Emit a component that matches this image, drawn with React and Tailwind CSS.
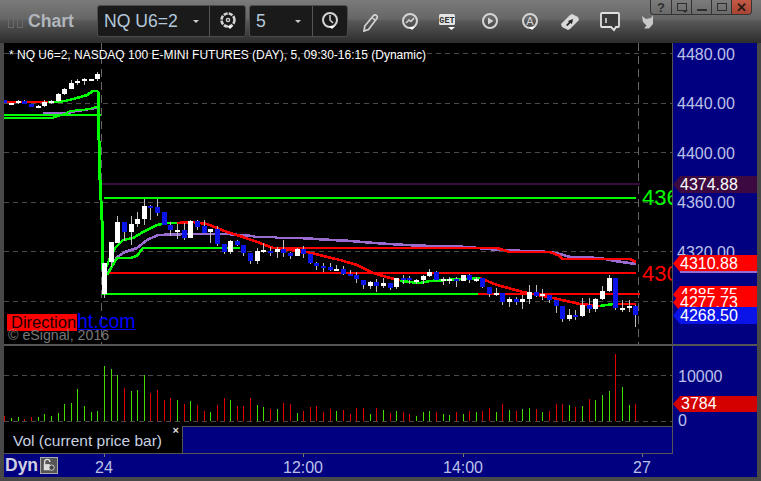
const FONT = { fontFamily: '"Liberation Sans", Arial, sans-serif' }

// top, bottom, high, low in page pixels, w = up bar, b = down bar
const candles = [
  ['b',100,103,100,103],['w',103,105,103,105],['w',101,103,100,104],['b',101,104,100,104],['b',104,107,104,107],
  ['w',106,108,105,108],['w',102,106,100,107],['w',101,103,100,104],['w',94,101,93,102],['w',89,94,88,95],
  ['w',83,89,80,89],['w',81,83,79,85],['w',79,81,78,85],['w',79,81,79,81],['w',74,79,72,81],
  ['w',263,294,263,298],['w',242,262,242,267],['w',222,243,216,243],['b',222,232,222,241],['w',224,232,216,245],
  ['w',219,224,212,227],['w',206,219,199,225],['b',206,208,205,220],['b',207,213,199,216],['b',212,225,212,225],
  ['b',225,230,222,236],['w',230,232,224,239],['b',230,238,223,240],['w',221,238,220,238],['b',221,227,220,230],
  ['b',226,233,220,233],['w',229,232,229,243],['b',229,244,226,246],['b',244,252,244,254],['w',241,252,240,254],
  ['b',241,245,240,246],['b',245,253,245,256],['b',253,261,253,264],['w',251,261,248,264],['w',250,252,243,253],
  ['b',251,253,247,256],['w',249,252,247,258],['b',249,253,240,257],['b',253,256,252,259],['w',249,256,248,256],
  ['b',249,254,246,258],['b',254,263,254,264],['b',263,266,262,270],['b',266,268,263,272],['b',267,270,263,271],
  ['w',269,271,265,271],['b',269,274,266,275],['b',274,276,270,276],['b',275,279,272,283],['b',280,285,280,289],
  ['w',282,286,281,289],['b',282,286,279,292],['w',283,286,278,288],['b',283,288,283,290],['w',278,287,278,289],
  ['b',278,280,275,284],['b',278,280,276,284],['w',280,282,279,284],['w',276,280,275,284],['w',272,276,269,277],
  ['b',272,280,271,281],['w',279,281,277,285],['w',279,281,277,284],['b',279,281,277,287],['w',275,281,275,281],
  ['b',275,280,274,283],['w',279,281,277,282],['b',278,287,278,288],['b',287,294,287,297],['w',293,295,288,296],
  ['b',293,302,293,305],['w',299,302,297,307],['b',299,302,297,305],['w',299,302,295,309],['w',292,299,285,304],
  ['b',292,296,285,297],['w',294,296,289,300],['b',295,300,295,303],['b',300,306,300,313],['b',306,319,306,322],
  ['w',315,319,309,321],['b',315,317,310,320],['w',305,316,298,317],['b',305,309,298,313],['w',299,309,298,312],
  ['w',291,299,286,300],['w',278,291,275,292],['b',278,308,278,310],['w',308,310,300,312],['w',306,308,300,312],
  ['b',306,315,305,327],
]

// height, r = red, g = green
const volume = [
  [5,'r'],[3,'g'],[4,'g'],[2,'r'],[4,'r'],[4,'g'],[7,'g'],[5,'g'],[8,'g'],[17,'g'],
  [18,'g'],[32,'g'],[15,'g'],[9,'g'],[10,'g'],[55,'g'],[52,'g'],[46,'g'],[33,'r'],[30,'g'],
  [31,'g'],[46,'g'],[28,'r'],[31,'r'],[21,'r'],[23,'r'],[21,'g'],[17,'r'],[20,'g'],[16,'r'],
  [10,'r'],[9,'g'],[16,'r'],[23,'r'],[21,'g'],[15,'r'],[15,'r'],[23,'r'],[16,'g'],[14,'g'],
  [12,'r'],[12,'g'],[18,'r'],[17,'r'],[8,'g'],[10,'r'],[14,'r'],[15,'r'],[9,'r'],[12,'r'],
  [10,'g'],[11,'r'],[7,'r'],[13,'r'],[13,'r'],[7,'g'],[13,'r'],
  [11,'g'],[8,'r'],[10,'g'],[9,'r'],[7,'r'],[5,'g'],[9,'g'],[10,'g'],[9,'r'],[7,'g'],
  [6,'g'],[9,'r'],[7,'g'],[10,'r'],[9,'g'],[10,'r'],[13,'r'],[9,'g'],[17,'r'],[11,'g'],
  [10,'r'],[12,'g'],[13,'g'],[12,'r'],[9,'g'],[10,'r'],[17,'r'],[17,'r'],[16,'g'],[14,'r'],
  [15,'g'],[22,'r'],[21,'g'],[26,'g'],[30,'g'],[67,'r'],[34,'g'],[16,'g'],[17,'r'],
]

const barX = (i) => Math.round(4.4 + 6.64 * i)

const GRN = '#00ff00'
const RED = '#ff0000'
const PUR = '#9a6cd0'

const lines = [
  // early session
  [PUR, 2, '43,113 70,113 72,112 85,110 97,108'],
  [GRN, 2, '4,115 101,115'],
  [GRN, 2, '4,118 52,118 58,116 65,114 70,111 80,110 90,109 95,107 98,107'],
  [RED, 2, '4,102 48,102'],
  [GRN, 2.6, '48,102 57,102 65,101 77,98 87,95 93,91 98,91'],
  // levels
  ['#3c0a40', 2, '100,184 640,184'],
  [GRN, 2, '104,198 636,198'],
  [RED, 2, '108,273 636,273'],
  [GRN, 2, '102,294 478,294'],
  [RED, 2, '478,294 640,294'],
  // slow averages
  [PUR, 2.6, '108,273 117,257 125,252 137,248 147,240 158,235 187,234 227,234 240,235 253,236 255,237 275,237 277,238 300,238 316,239 332,240 351,241 362,242 375,243 389,244 406,245 430,246 453,246 478,248 500,250 550,252 560,254 570,257 600,258 615,261 636,264'],
  [GRN, 2.6, '107,275 117,258 130,258 137,256 143,248 157,248 240,248'],
  [RED, 2.6, '273,248 497,248 503,250 510,252 550,252 560,256 562,259 630,259 636,262'],
  // fast average
  [GRN, 2.6, '103,273 115,248 123,240 133,238 143,232 157,225 167,223 177,223'],
  [RED, 2.6, '177,223 193,222 207,224 227,232 240,236 260,243 273,248 307,252 340,260 357,265 373,273 390,278 400,280'],
  [GRN, 2.6, '400,281 420,283 430,281 447,280 480,278'],
  [RED, 2.6, '480,278 497,285 523,292 533,294 553,298 580,304 600,306'],
  [GRN, 2.6, '600,306 613,304'],
  [RED, 2.6, '613,304 636,304'],
  // opening gap
  [GRN, 3, '98,91 99,140 100,180 102,220 103,270 104,294'],
]

const ticks = [
  ['4480.00', 46],
  ['4440.00', 95],
  ['4400.00', 145],
  ['4360.00', 194],
  ['4320.00', 244],
]

function PriceChart() {
  return (
    <svg viewBox="4 43 668 301" width="668" height="301" shapeRendering="crispEdges" className="block">
      {[53, 103, 152, 202, 251, 301].map((y) => (
        <line key={y} x1="4" x2="672" y1={y + 0.5} y2={y + 0.5} stroke="#4a4a4a" strokeDasharray="5 4" />
      ))}
      <line x1="101.5" x2="101.5" y1="43" y2="344" stroke="#666" strokeDasharray="8 5" />
      <line x1="638.5" x2="638.5" y1="43" y2="344" stroke="#666" strokeDasharray="8 5" />
      {lines.map(([color, w, points], i) => (
        <polyline key={i} points={points} fill="none" stroke={color} strokeWidth={w} />
      ))}
      {candles.map(([kind, top, bottom, hi, lo], i) => {
        const x = barX(i)
        return (
          <g key={i}>
            <rect x={x} y={hi} width="1" height={lo - hi} fill="#bdbdbd" />
            <rect x={x - 2} y={top} width="5" height={Math.max(bottom - top, 2)} fill={kind === 'w' ? '#ffffff' : '#0a14e8'} />
          </g>
        )
      })}
      <text x="642" y="205" fontSize="22" fill={GRN} shapeRendering="auto" style={FONT}>436</text>
      <text x="642" y="281" fontSize="22" fill={RED} shapeRendering="auto" style={FONT}>430</text>
    </svg>
  )
}

function VolumeChart() {
  return (
    <svg viewBox="4 346 668 80" width="668" height="80" shapeRendering="crispEdges" className="block">
      <line x1="4" x2="672" y1="375.5" y2="375.5" stroke="#4a4a4a" strokeDasharray="5 4" />
      <line x1="4" x2="672" y1="421.5" y2="421.5" stroke="#4a4a4a" strokeDasharray="5 4" />
      {volume.map(([h, c], i) => (
        <rect key={i} x={barX(i)} y={421 - h} width="1" height={h} fill={c === 'g' ? '#44dd00' : '#e00000'} />
      ))}
    </svg>
  )
}

function PriceTag({ top, bg, children }) {
  return (
    <div
      className="absolute left-0 w-[84px] h-[17px] pl-[7px] text-[16px] leading-[17px] text-white [clip-path:polygon(0_50%,7px_0,100%_0,100%_100%,7px_100%)]"
      style={{ top, background: bg }}
    >
      {children}
    </div>
  )
}

const Drop = () => <path d="M11 17h6l-3 3z" fill="#fff" stroke="none" />

function Icon({ children }) {
  return (
    <svg viewBox="0 0 24 24" width="24" height="24" fill="none" stroke="#d4d4d4" strokeWidth="2">
      {children}
    </svg>
  )
}

function WinButton({ children, className }) {
  return (
    <div className={`w-[20px] h-[14px] flex items-center justify-center border-l border-[#333] ${className || ''}`}>
      {children}
    </div>
  )
}

export default function App() {
  return (
    <div style={FONT} className="relative w-[761px] h-[481px] overflow-hidden bg-[#484848] flex flex-col">
      {/* toolbar */}
      <div className="h-[43px] flex items-start bg-[linear-gradient(#7a7a7a_0,#666_19px,#585858_21px,#2c2c2c_43px)]">
        <div className="w-[97px] h-[43px] pl-[8px] flex items-center gap-[3px]">
          <div className="w-[6px] h-[12px] border border-[#6a6a6a]" />
          <div className="w-[6px] h-[12px] border border-[#6a6a6a]" />
          <span className="ml-[2px] text-[17.6px] font-bold text-[#b0b6be]">Chart</span>
        </div>
        <div className="mt-[5px] w-[149px] h-[32px] flex bg-[#1a1a1a] border border-[#4c4c4c] rounded-[3px]">
          <div className="w-[111px] flex items-center pl-[6px] text-[17.6px] text-[#b4c8dc]">
            NQ U6=2
            <span className="ml-[15px] border-x-[3px] border-t-[3px] border-x-transparent border-t-[#ccc]" />
          </div>
          <div className="flex-1 border-l border-[#555] flex items-center justify-center">
            <Icon>
              <circle cx="12" cy="11" r="6.5" strokeWidth="2.6" strokeDasharray="4 1.1" />
              <circle cx="12" cy="11" r="1.6" strokeWidth="1.4" />
              <Drop />
            </Icon>
          </div>
        </div>
        <div className="mt-[5px] ml-[3px] w-[99px] h-[32px] flex bg-[#1a1a1a] border border-[#4c4c4c] rounded-[3px]">
          <div className="w-[62px] flex items-center pl-[6px] text-[17.6px] text-[#b4c8dc]">
            5
            <span className="ml-[29px] border-x-[3px] border-t-[3px] border-x-transparent border-t-[#ccc]" />
          </div>
          <div className="flex-1 border-l border-[#555] flex items-center justify-center">
            <Icon>
              <circle cx="12" cy="11" r="7" />
              <path d="M12 6v5l3 3" strokeWidth="1.5" />
              <Drop />
            </Icon>
          </div>
        </div>
        <div className="ml-[2px] flex h-[43px] items-center">
          <div className="w-[40px] flex justify-center">
            <Icon>
              <path d="M6 21l.8-5L15.5 5.5a2 2 0 0 1 3 0 2 2 0 0 1 .3 3L10.5 19.5z" strokeWidth="1.7" />
              <path d="M14 7.5l3.5 3" strokeWidth="1.2" />
            </Icon>
          </div>
          <div className="w-[40px] flex justify-center">
            <Icon>
              <circle cx="12" cy="11" r="7" />
              <path d="M8 13l3-3 2 1.5L16 8" strokeWidth="1.6" />
              <Drop />
            </Icon>
          </div>
          <div className="w-[40px] flex justify-center">
            <svg viewBox="0 0 24 24" width="24" height="24">
              <rect x="1" y="4" width="16" height="11" rx="1.5" fill="#e4e4e4" />
              <text x="9" y="13" textAnchor="middle" fontSize="8.5" fontWeight="700" fill="#333" style={{ fontFamily: '"Liberation Mono", monospace' }}>GET</text>
              <path d="M10 17h7l-3.500 3z" fill="#fff" />
            </svg>
          </div>
          <div className="w-[40px] flex justify-center">
            <Icon>
              <circle cx="12" cy="11" r="7" />
              <path d="M10 7.500l5.500 3.500-5.500 3.500z" fill="#d4d4d4" stroke="none" />
            </Icon>
          </div>
          <div className="w-[40px] flex justify-center">
            <svg viewBox="0 0 24 24" width="24" height="24" fill="none" stroke="#d4d4d4" strokeWidth="2">
              <circle cx="12" cy="11" r="7" />
              <text x="12" y="15" textAnchor="middle" fontSize="11" fill="#d4d4d4" stroke="none">A</text>
              <Drop />
            </svg>
          </div>
          <div className="w-[40px] flex justify-center">
            <svg viewBox="0 0 24 24" width="24" height="24">
              <path d="M3 14l9-9 2-1 6 3 1 3-9 9-2 1-6-3z" fill="#d8d8d8" />
              <path d="M8 15l3-3 -1-1 5-2-1 5-1.500-1-3 3z" fill="#222" />
            </svg>
          </div>
          <div className="w-[40px] flex justify-center">
            <svg viewBox="0 0 24 24" width="24" height="24">
              <path d="M4 3h16a1 1 0 0 1 1 1v12a1 1 0 0 1-1 1h-2l-2 3-3-3H4a1 1 0 0 1-1-1V4a1 1 0 0 1 1-1z" fill="#3a3a3a" stroke="#e0e0e0" strokeWidth="1.800" />
              <path d="M8 8v5" stroke="#e0e0e0" strokeWidth="1.500" />
            </svg>
          </div>
          <div className="ml-[12px] mt-[1px]">
            <svg viewBox="0 0 11 14" width="11" height="14">
              <path d="M0 1l4 3 5-1 2-3v9l-4 4.500H2l2.500-3L1 7z" fill="#c8c8c8" />
            </svg>
          </div>
        </div>
      </div>

      {/* window controls */}
      <div className="absolute top-0 right-[9px] flex h-[15px] border border-t-0 border-[#333] rounded-b-[4px] overflow-hidden bg-[linear-gradient(#7c7c7c,#6a6a6a)]">
        <WinButton className="border-l-0">
          <span className="text-[13px] font-bold leading-none text-[#2e2e2e]">?</span>
        </WinButton>
        <WinButton>
          <div className="relative w-[10px] h-[8px] border border-[#2e2e2e]">
            <span className="absolute right-[-2px] bottom-[-3px] border-x-[3px] border-t-[3px] border-x-transparent border-t-[#2e2e2e]" />
          </div>
        </WinButton>
        <WinButton>
          <div className="w-[10px] h-[2px] mt-[5px] bg-[#2e2e2e]" />
        </WinButton>
        <WinButton>
          <div className="w-[10px] h-[8px] border border-[#2e2e2e]" />
        </WinButton>
        <WinButton className="bg-[linear-gradient(#c45a46,#a84432)]">
          <span className="text-[13px] font-bold leading-none text-[#2a1a16]">✕</span>
        </WinButton>
      </div>

      {/* price pane */}
      <div className="flex h-[301px] pl-[4px] pr-[4px]">
        <div className="relative w-[668px] bg-black overflow-hidden">
          <PriceChart />
          <span className="absolute left-[5px] top-[5px] text-[12px] leading-[14px] text-white whitespace-nowrap">
            * NQ U6=2, NASDAQ 100 E-MINI FUTURES (DAY), 5, 09:30-16:15 (Dynamic)
          </span>
          <div className="absolute left-[3px] top-[268px] flex items-end h-[20px]">
            <span className="w-[70px] h-[17px] pl-[4px] bg-[#ff0000] text-[16.5px] leading-[17px] text-[#200000]">Direction</span>
            <span className="text-[19.5px] leading-[20px] text-[#0000ff] underline">ht.com</span>
          </div>
          <span className="absolute left-[4px] top-[284px] text-[14.2px] leading-[16px] text-[#777]">© eSignal, 2016</span>
        </div>
        <div className="relative flex-1 bg-[#000080] border-l border-[#555] text-[16px] text-[#bcc0e8]">
          {ticks.map(([label, y]) => (
            <span key={label} className="absolute left-[4px] leading-[18px]" style={{ top: y - 43 }}>
              {label}
            </span>
          ))}
          <PriceTag top={133} bg="#3c0a40">4374.88</PriceTag>
          <PriceTag top={212} bg="#ff0000">4310.88</PriceTag>
          <div className="absolute left-[7px] top-[228px] w-[77px] h-[2px] bg-[#9a6cd0]" />
          <PriceTag top={243} bg="#ff0000">4285.75</PriceTag>
          <PriceTag top={251} bg="#ff0000">4277.73</PriceTag>
          <PriceTag top={264} bg="#0a14e8">4268.50</PriceTag>
        </div>
      </div>

      <div className="h-[2px] mx-[4px] bg-[#555]" />

      {/* volume pane and legend */}
      <div className="flex h-[108px] pl-[4px] pr-[4px]">
        <div className="w-[668px] flex flex-col">
          <div className="h-[80px] bg-black">
            <VolumeChart />
          </div>
          <div className="flex h-[28px]">
            <div className="relative w-[178px] bg-black border-b border-[#555] flex items-center pl-[9px] pt-[3px] text-[15.5px] text-[#c8d0e0]">
              Vol (current price bar)
              <span className="absolute right-[3px] top-[-3px] text-[11px] font-bold leading-[14px] text-[#ddd]">×</span>
            </div>
            <div className="flex-1 bg-[#000080] border-t border-l border-b border-[#555]" />
          </div>
        </div>
        <div className="relative flex-1 bg-[#000080] border-l border-[#555] text-[16px] text-[#bcc0e8]">
          <span className="absolute left-[5px] top-[22px] leading-[18px]">10000</span>
          <div className="absolute left-0 w-full top-[50px] h-[16px] bg-[#d40000] pl-[8px] text-white leading-[16px] [clip-path:polygon(0_50%,7px_0,100%_0,100%_100%,7px_100%)]">
            3784
          </div>
          <div className="absolute top-[66px] left-[5px] h-[14px] overflow-hidden leading-[18px]">0</div>
        </div>
      </div>

      {/* time axis */}
      <div className="relative h-[23px] mx-[4px] bg-[#000080] text-[16px] text-[#bcc0e8]">
        <div className="absolute left-[1px] top-[1px] flex items-center gap-[2px]">
          <span className="text-[17.5px] font-bold leading-[20px] text-[#d0d0e0]">Dyn</span>
          <div className="w-[18px] h-[17px] bg-[#555] border border-[#aaa] flex items-center justify-center">
            <svg viewBox="0 0 16 16" width="14" height="14" fill="none" stroke="#ddd" strokeWidth="1.500">
              <path d="M3 7V4.500a3 3 0 0 1 6 0" />
              <rect x="2" y="7" width="7" height="7" fill="#ddd" stroke="none" />
              <circle cx="11" cy="11" r="3" fill="#444" strokeWidth="1" />
            </svg>
          </div>
        </div>
        {[['24', 100], ['12:00', 299], ['14:00', 459], ['27', 638]].map(([label, x]) => (
          <div key={label} className="absolute top-0 h-full" style={{ left: x }}>
            <div className="w-px h-[3px] bg-[#777]" />
            <span className="absolute top-[5px] left-0 -translate-x-1/2 leading-[18px]">{label}</span>
          </div>
        ))}
      </div>
    </div>
  )
}
